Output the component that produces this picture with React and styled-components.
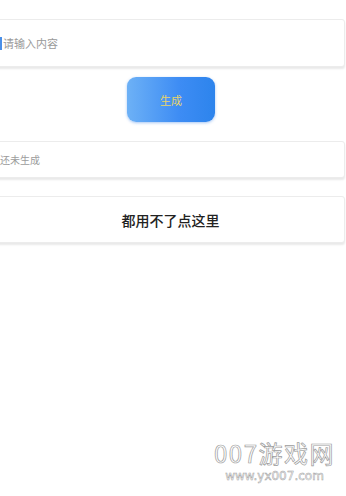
import React from "react";
import styled, { createGlobalStyle } from "styled-components";

const GlobalStyle = createGlobalStyle`
  html, body {
    margin: 0;
    padding: 0;
    background: #ffffff;
  }
  body {
    font-family: "Noto Sans CJK SC", "Noto Sans", sans-serif;
    width: 346px;
    height: 496px;
    overflow: hidden;
  }
`;

const Page = styled.div`
  position: relative;
  width: 346px;
  height: 496px;
  padding-top: 19px;
  box-sizing: border-box;
  display: flex;
  flex-direction: column;
`;

const Card = styled.div`
  margin-left: -10px;
  width: 355px;
  height: ${(p) => p.$h}px;
  box-sizing: border-box;
  background: #fff;
  border: 1px solid #ececec;
  border-radius: 3px;
  box-shadow: 0 2px 2px rgba(0, 0, 0, 0.09);
  display: flex;
  align-items: center;
  justify-content: ${(p) => (p.$center ? "center" : "flex-start")};
  padding-left: ${(p) => (p.$center ? 0 : 9)}px;
  margin-bottom: ${(p) => p.$mb || 0}px;
`;

const Caret = styled.span`
  display: inline-block;
  width: 2px;
  height: 13px;
  background: #4a8fe8;
  margin-right: 1px;
`;

const Placeholder = styled.span`
  font-size: 11px;
  color: #9a9a9a;
`;

const Status = styled.span`
  font-size: 10px;
  color: #9c9c9c;
`;

const Help = styled.span`
  font-size: 14px;
  color: #222;
  font-weight: 500;
  margin-left: 6px;
`;

const ButtonRow = styled.div`
  display: flex;
  justify-content: center;
  padding-right: 4px;
  margin: 10px 0 19px;
`;

const GenButton = styled.button`
  width: 88px;
  height: 45px;
  border: none;
  border-radius: 9px;
  background: linear-gradient(90deg, #6db1f6 0%, #3d8cf4 60%, #2d84ec 100%);
  box-shadow: 0 1px 3px rgba(60, 130, 230, 0.45);
  color: #e8d46a;
  font-family: inherit;
  font-size: 11px;
  cursor: pointer;
`;

const Watermark = styled.div`
  position: absolute;
  left: 214px;
  top: 441px;
  display: flex;
  flex-direction: column;
  align-items: center;
  white-space: nowrap;
  color: #fff;
  -webkit-text-stroke: 0.7px #9c9c9c;
  line-height: 1;
`;

const MarkTitle = styled.span`
  font-family: "Noto Sans CJK SC", sans-serif;
  font-size: 24px;
  letter-spacing: 1.5px;
`;

const MarkUrl = styled.span`
  font-family: "DejaVu Sans", sans-serif;
  font-size: 12px;
  margin-top: 5px;
  -webkit-text-stroke: 0.5px #9c9c9c;
`;

export default function App() {
  return (
    <>
      <GlobalStyle />
      <Page>
        <Card $h={48}>
          <Caret />
          <Placeholder>请输入内容</Placeholder>
        </Card>
        <ButtonRow>
          <GenButton>生成</GenButton>
        </ButtonRow>
        <Card $h={37} $mb={18}>
          <Status>还未生成</Status>
        </Card>
        <Card $h={47} $center>
          <Help>都用不了点这里</Help>
        </Card>
        <Watermark>
          <MarkTitle>007游戏网</MarkTitle>
          <MarkUrl>www.yx007.com</MarkUrl>
        </Watermark>
      </Page>
    </>
  );
}
